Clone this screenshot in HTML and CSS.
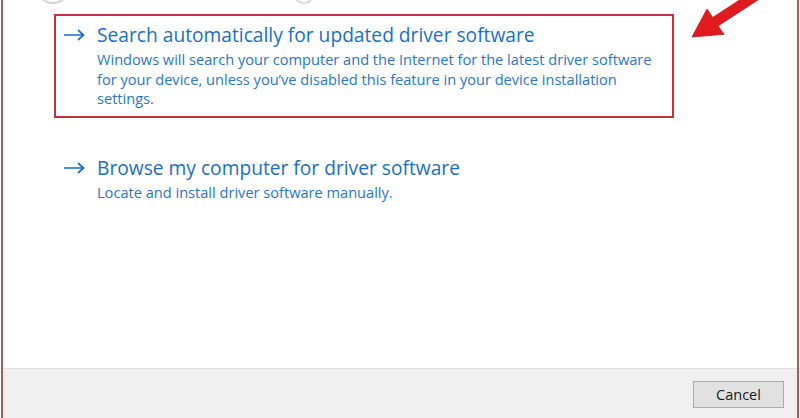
FILE: index.html
```html
<!DOCTYPE html>
<html lang="en">

<head>
  <meta charset="UTF-8">
  <meta name="viewport" content="width=device-width, initial-scale=1.0">
  <title>Update Drivers</title>
  <link rel="stylesheet" href="styles.css">
</head>

<body>
  <div class="window">
    <span class="ring ring-back"></span>
    <span class="ring ring-title"></span>

    <div class="content">
      <div class="option highlighted">
        <svg class="go" width="21" height="12" viewBox="0 0 21 12">
          <path d="M0 6H19.5M14 1l5.5 5-5.5 5" fill="none" stroke="#1a6fc4" stroke-width="1.7"/>
        </svg>
        <div class="text">
          <div class="title">Search automatically for updated driver software</div>
          <div class="desc">Windows will search your computer and the Internet for the latest driver software for your device, unless you’ve disabled this feature in your device installation settings.</div>
        </div>
      </div>

      <div class="option">
        <svg class="go" width="21" height="12" viewBox="0 0 21 12">
          <path d="M0 6H19.5M14 1l5.5 5-5.5 5" fill="none" stroke="#1a6fc4" stroke-width="1.7"/>
        </svg>
        <div class="text">
          <div class="title">Browse my computer for driver software</div>
          <div class="desc">Locate and install driver software manually.</div>
        </div>
      </div>
    </div>

    <div class="footer">
      <button class="btn">Cancel</button>
    </div>

    <!-- annotation arrow -->
    <svg class="pointer" width="100" height="50" viewBox="680 -10 100 50">
      <polygon points="691,37 706,9 711.7,17.5 757.3,-12.2 762.7,-3.8 717.1,25.9 723,34.3" fill="#e11a1f" stroke="#c4161a" stroke-width="0.8" stroke-linejoin="round"/>
    </svg>
  </div>
</body>

</html>
```

FILE: styles.css
```css
body {
  margin: 0;
  background-color: #fff;
  font-family: 'Open Sans', 'Noto Sans', sans-serif;
}

.window {
  position: relative;
  height: 418px;
  margin: 0 1px;
  border-left: 2px solid #a55c60;
  border-right: 2px solid #a55c60;
  display: flex;
  flex-direction: column;
  overflow: hidden;
}

.content {
  flex: 1;
  background-color: #fff;
  padding: 14px 0 0 51px;
}

.option {
  display: flex;
  align-items: flex-start;
  box-sizing: border-box;
  width: 620px;
  padding: 5px 0 0 8px;
  border: 2px solid transparent;
}

.option + .option {
  margin-top: 29px;
}

.highlighted {
  border-color: #c5303f;
  height: 104px;
}

.go {
  margin-top: 8px;
  margin-right: 12px;
  flex-shrink: 0;
}

.title {
  color: #1a6fc4;
  font-size: 19.2px;
  line-height: 28px;
}

.desc {
  color: #2a76c8;
  font-size: 14.6px;
  line-height: 19.5px;
  width: 562px;
  margin-top: 1px;
}

.footer {
  height: 50px;
  background-color: #f0f0f0;
  border-top: 1px solid #e0e0e0;
  display: flex;
  justify-content: flex-end;
  align-items: flex-start;
  padding: 12px 13px 0 0;
  box-sizing: border-box;
}

.btn {
  width: 91px;
  height: 27px;
  background-color: #e1e1e1;
  border: 1px solid #adadad;
  font-family: 'Open Sans', 'Noto Sans', sans-serif;
  font-size: 14.5px;
  color: #1a1a1a;
  padding: 0;
}

.ring {
  position: absolute;
  border: 2px solid #d4d4d4;
  border-radius: 50%;
}

.ring-back {
  left: 33px;
  top: -30px;
  width: 30px;
  height: 30px;
}

.ring-title {
  left: 290px;
  top: -20px;
  width: 18px;
  height: 20px;
  border-color: transparent transparent #dadada #dadada;
}

.pointer {
  position: absolute;
  left: 678px;
  top: -10px;
}
```
